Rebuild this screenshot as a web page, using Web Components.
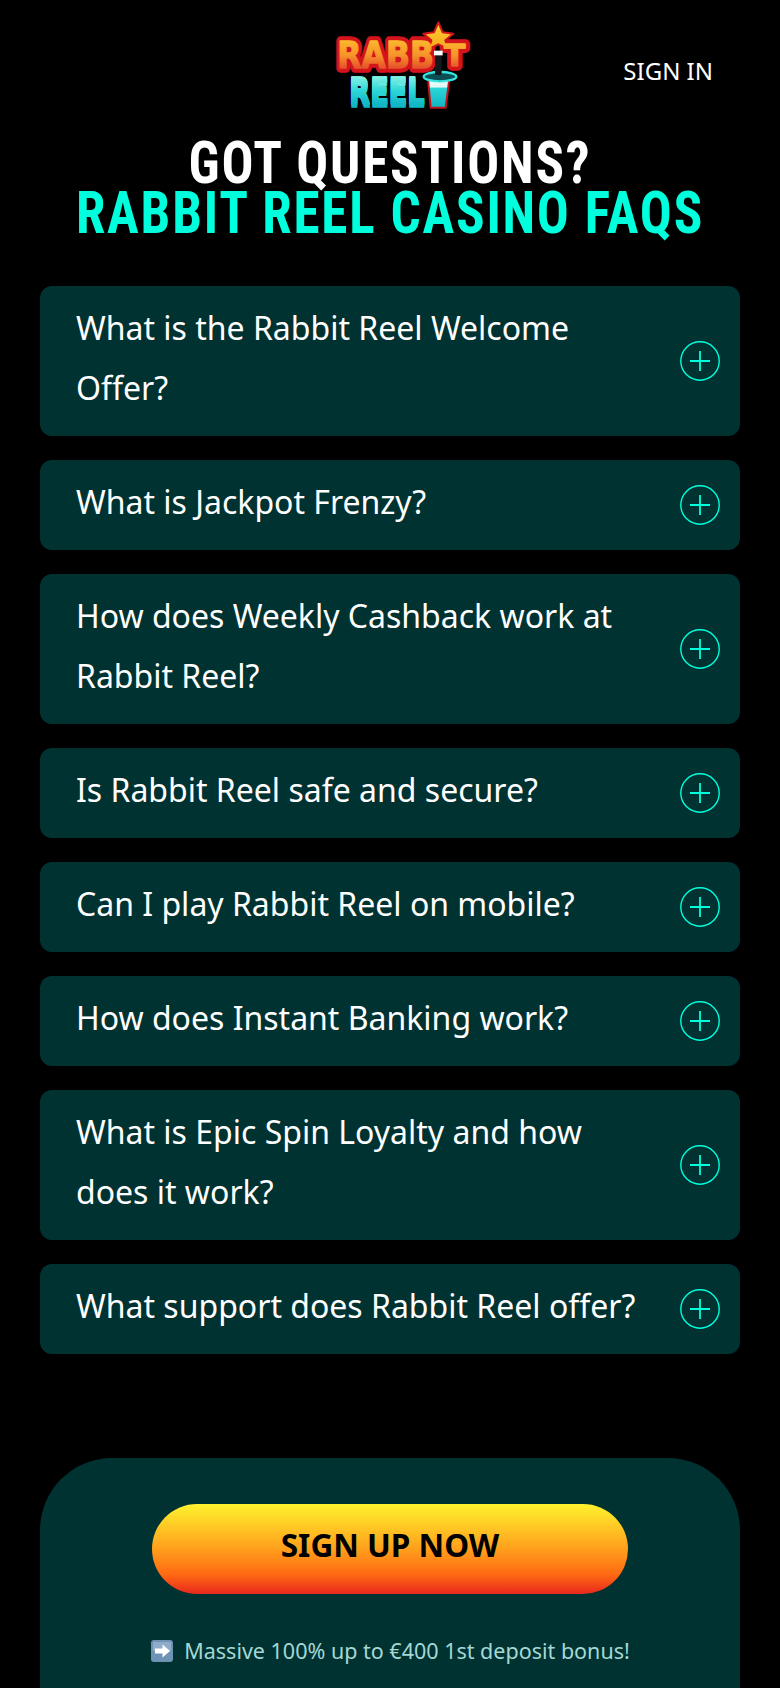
<!DOCTYPE html>
<html lang="en"><head><meta charset="utf-8"><title>Rabbit Reel FAQs</title>
<style>
html,body{margin:0;padding:0;background:#000;height:1688px;overflow:hidden}
body{font-family:"Noto Sans","Open Sans",sans-serif;color:#fff}
</style></head><body>
<faq-page>
<site-header></site-header>
<faq-title></faq-title>
<faq-list>
<faq-item>What is the Rabbit Reel Welcome Offer?</faq-item>
<faq-item>What is Jackpot Frenzy?</faq-item>
<faq-item>How does Weekly Cashback work at Rabbit Reel?</faq-item>
<faq-item>Is Rabbit Reel safe and secure?</faq-item>
<faq-item>Can I play Rabbit Reel on mobile?</faq-item>
<faq-item>How does Instant Banking work?</faq-item>
<faq-item>What is Epic Spin Loyalty and how does it work?</faq-item>
<faq-item>What support does Rabbit Reel offer?</faq-item>
</faq-list>
<signup-panel></signup-panel>
</faq-page>
<script>
function def(name,html){customElements.define(name,class extends HTMLElement{constructor(){super();this.attachShadow({mode:'open'}).innerHTML=html}})}
def('faq-page',`<style>:host{display:block;height:1688px;overflow:hidden}</style><slot></slot>`);
def('site-header',`<style>:host{display:grid;grid-template-columns:1fr auto 1fr;align-items:center;height:138px;padding:0 67px 0 90px;box-sizing:border-box}
svg{display:block;grid-column:2}
a{grid-column:3;justify-self:end;font-size:24px;color:#fff;margin-top:3px}
text{font-family:"DejaVu Sans",Lato,sans-serif;font-weight:700;stroke-linejoin:round}
</style>
<svg width="144" height="100" viewBox="90 60 432 300">
<defs><linearGradient id="o" gradientUnits="userSpaceOnUse" x1="0" y1="122" x2="0" y2="208"><stop offset="0" stop-color="#fdb92e"/><stop offset=".55" stop-color="#f6932a"/><stop offset="1" stop-color="#e5502a"/></linearGradient>
<linearGradient id="t" gradientUnits="userSpaceOnUse" x1="0" y1="235" x2="0" y2="318"><stop offset="0" stop-color="#7ff0e4"/><stop offset=".5" stop-color="#2bd6d6"/><stop offset="1" stop-color="#0fb4c4"/></linearGradient>
<linearGradient id="h" x1="0" y1="0" x2="0" y2="1"><stop offset="0" stop-color="#eafcf8"/><stop offset=".28" stop-color="#dff8f4"/><stop offset=".32" stop-color="#2ad6d8"/><stop offset="1" stop-color="#11b4c2"/></linearGradient>
<linearGradient id="s" x1="0" y1="0" x2="0" y2="1"><stop offset="0" stop-color="#ffd52e"/><stop offset="1" stop-color="#f5a51f"/></linearGradient></defs>
<g transform="translate(0 8)" stroke="#8c0a12" stroke-width="28"><use href="#l3"/></g>
<g stroke="#d4141c" stroke-width="28"><use href="#l1"/><use href="#l2"/><use href="#l3"/></g>
<polygon points="415,70 428,100 460,104 436,124 444,150 415,136 386,150 394,124 370,104 402,100" fill="url(#s)" stroke="#d4141c" stroke-width="6" stroke-linejoin="round"/>
<g stroke="url(#o)" stroke-width="4"><text id="l1" x="112" y="206" textLength="290" lengthAdjust="spacingAndGlyphs" font-size="112" fill="url(#o)">RABB</text>
<text id="l2" x="432" y="200" textLength="64" lengthAdjust="spacingAndGlyphs" font-size="92" fill="url(#o)">T</text></g>
<text id="l3" x="148" y="316" textLength="226" lengthAdjust="spacingAndGlyphs" font-size="112" fill="url(#t)" stroke="url(#t)" stroke-width="4">REEL</text>
<path d="M384 240 H448 L437 326 H392 Z" fill="url(#h)" stroke="#c4121a" stroke-width="6" stroke-linejoin="round"/>
<ellipse cx="420" cy="233" rx="49" ry="14" fill="#0a4f55" stroke="#35e2dc" stroke-width="7"/>
<rect x="405" y="155" width="20" height="73" rx="4" fill="#12181e"/>
<rect x="402" y="155" width="26" height="14" fill="#fff"/>
</svg>
<a>SIGN IN</a>`);
def('faq-title',`<style>:host{display:block;text-align:center;font:700 59px/50px "Roboto Condensed",Roboto,sans-serif;letter-spacing:2px;color:#fff}
div{white-space:nowrap;transform:scaleX(.9)}.c{color:#00ffdd}</style>
<div>GOT QUESTIONS?</div><div class="c">RABBIT REEL CASINO FAQS</div>`);
def('faq-list',`<style>:host{display:flex;flex-direction:column;gap:24px;margin:48px 40px 0}</style><slot></slot>`);
def('faq-item',`<style>:host{display:flex;align-items:center;justify-content:space-between;gap:30px;background:#003232;border-radius:12px;padding:12px 20px 18px 36px;font-size:32px;line-height:60px;color:#fff}
svg{flex:none;width:40px;height:40px;margin-top:5px}
.t{flex:1}
</style><div class="t"><slot></slot></div>
<svg viewBox="0 0 40 40" fill="none" stroke="#00ffdd"><circle cx="20" cy="20" r="19.2" stroke-width="1.4"/><path d="M10 20H30M20 10V30" stroke-width="1.8"/></svg>`);
def('signup-panel',`<style>:host{display:flex;flex-direction:column;align-items:center;margin:104px 40px 0;height:230px;background:#003232;border-radius:72px 72px 0 0;padding-top:46px;box-sizing:border-box}
button{width:476px;height:90px;border:0;border-radius:45px;background:linear-gradient(#fff22e,#ff9f1c 50%,#ff6a12 78%,#e8281e);font:700 31.500px/40px "Noto Sans",sans-serif;color:#000;padding:0 0 9px}
p{display:flex;align-items:center;gap:10px;margin:42px 0 0;font-size:21.500px;line-height:30px;color:#a4d8d4}
svg{width:24px;height:24px;flex:none}
</style><button>SIGN UP NOW</button>
<p><svg viewBox="0 0 24 24"><rect x="1" y="1" width="22" height="22" rx="3" fill="#6f93b5"/><path d="M3 12V3.500Q3 3 3.500 3H20.500Q21 3 21 3.500V12Z" fill="#8fadc9"/><path d="M5 9.500H12.500V5.500L20 12L12.500 18.500V14.500H5Z" fill="#fff"/></svg><span>Massive 100% up to €400 1st deposit bonus!</span></p>`);
</script></body></html>
